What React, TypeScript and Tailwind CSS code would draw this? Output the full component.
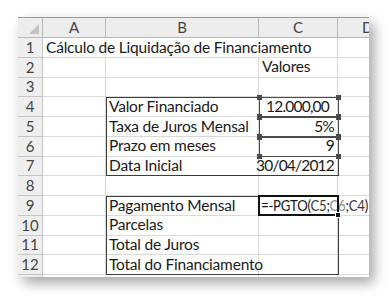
const cols = ['A', 'B', 'C', 'D']

type Cell = { text?: React.ReactNode; num?: boolean; span?: 2 | 3; editor?: boolean; pad?: boolean }

const sheet: Cell[][] = [
  [{ text: 'Cálculo de Liquidação de Financiamento', span: 3 }, {}],
  [{}, {}, { text: 'Valores' }, {}],
  [{}, {}, {}, {}],
  [{}, { text: 'Valor Financiado' }, { text: '12.000,00', num: true, pad: true }, {}],
  [{}, { text: 'Taxa de Juros Mensal' }, { text: '5%', num: true }, {}],
  [{}, { text: 'Prazo em meses' }, { text: '9', num: true }, {}],
  [{}, { text: 'Data Inicial' }, { text: '30/04/2012', num: true }, {}],
  [{}, {}, {}, {}],
  [
    {},
    { text: 'Pagamento Mensal' },
    {
      span: 2,
      editor: true,
      text: (
        <span className="inline-block origin-left scale-x-[0.88] tracking-[-0.3px]">
          =-PGTO(<span className="text-[#3a3a3a]">C5</span>;<span className="text-[#8c8c8c]">C6</span>;
          <span className="text-[#3a3a3a]">C4</span>)
        </span>
      ),
    },
  ],
  [{}, { text: 'Parcelas' }, {}, {}],
  [{}, { text: 'Total de Juros' }, {}, {}],
  [{}, { text: 'Total do Financiamento' }, {}, {}],
  [{}, {}, {}, {}],
]

const spanClass = { 2: 'col-span-2', 3: 'col-span-3' }

// row tops inside the sheet: header 20px, rows 19.75px
const rowTop = (r: number) => 20 + (r - 1) * 19.75

function Handles() {
  return (
    <>
      <span className="absolute -left-[3px] -top-[3px] h-[5px] w-[5px] bg-[#4a4a4a]" />
      <span className="absolute -right-[3px] -top-[3px] h-[5px] w-[5px] bg-[#4a4a4a]" />
      <span className="absolute -left-[3px] -bottom-[3px] h-[5px] w-[5px] bg-[#4a4a4a]" />
      <span className="absolute -right-[3px] -bottom-[3px] h-[5px] w-[5px] bg-[#4a4a4a]" />
    </>
  )
}

export default function App() {
  return (
    <div
      className="h-[302px] w-[391px] bg-white pl-[18px] pt-[17px]"
      style={{ fontFamily: 'Lato, "Open Sans", sans-serif' }}
    >
      <div className="relative h-[260px] w-[351px] overflow-hidden border-t border-[#9a9a9a] bg-white shadow-[5px_6px_12px_rgba(0,0,0,0.35)]">
        <div className="grid grid-cols-[25px_63px_153px_79px_60px] text-[15.5px] leading-none tracking-[-0.2px] text-[#1a1a1a]">
          <div className="relative h-[20px] border-b border-r border-[#b8b8b8] bg-[#ededed]">
            <span className="absolute bottom-[3px] right-[3px] h-0 w-0 border-b-[10px] border-l-[10px] border-b-[#c4c4c4] border-l-transparent" />
          </div>
          {cols.map((c) => (
            <div
              key={c}
              className="flex h-[20px] items-center justify-center border-b border-r border-[#b8b8b8] bg-[#ededed] text-[15px] text-[#444]"
            >
              {c}
            </div>
          ))}

          {sheet.map((cells, i) => (
            <div key={i} className="contents">
              <div className="flex h-[19.75px] items-center justify-center border-b border-r border-[#c6c6c6] bg-[#efefef] text-[15px] tracking-normal text-[#444]">
                {i < 12 ? i + 1 : ''}
              </div>
              {cells.map((cell, j) => (
                <div
                  key={j}
                  className={`flex h-[19.75px] items-center whitespace-nowrap border-b border-[#dadada] ${
                    cell.span ? spanClass[cell.span] : ''
                  } ${cell.editor ? 'pl-[2px] text-[15px]' : 'border-r pl-[3px]'} ${
                    cell.num ? 'justify-end tracking-[-0.8px]' : 'justify-start'
                  } ${cell.pad ? 'pr-[8px]' : 'pr-[3px]'}`}
                >
                  {cell.text}
                </div>
              ))}
            </div>
          ))}
        </div>

        {/* range outlines B4:C7 and B9:C12 */}
        {[4, 9].map((r) => (
          <div
            key={r}
            className="absolute left-[88px] h-[79px] w-[233px] border-[1.5px] border-[#3c3c3c]"
            style={{ top: rowTop(r) }}
          />
        ))}

        {/* cells referenced by the formula */}
        {[4, 5, 6].map((r) => (
          <div
            key={r}
            className="absolute left-[241px] h-[19.75px] w-[80px] border border-[#4a4a4a]"
            style={{ top: rowTop(r) }}
          >
            <Handles />
          </div>
        ))}

        {/* active cell C9 */}
        <div
          className="absolute left-[240px] h-[21px] w-[81px] border-2 border-[#111]"
          style={{ top: rowTop(9) - 1 }}
        >
          <span className="absolute -bottom-[4px] -right-[4px] h-[6px] w-[6px] border border-white bg-[#111]" />
        </div>
      </div>
    </div>
  )
}
